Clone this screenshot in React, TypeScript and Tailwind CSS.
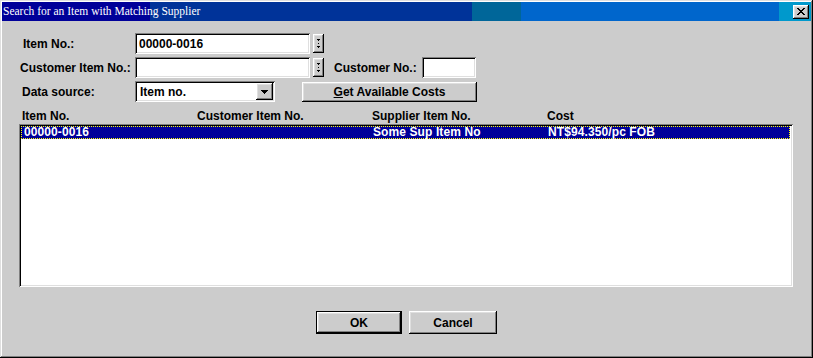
import type { ReactNode } from 'react';

const raised =
  'bg-[#cccccc] shadow-[inset_-1px_-1px_#000,inset_1px_1px_#fff,inset_-2px_-2px_#808080,inset_2px_2px_#dfdfdf]';
const sunken =
  'bg-white shadow-[inset_1px_1px_#808080,inset_-1px_-1px_#fff,inset_2px_2px_#000,inset_-2px_-2px_#dfdfdf]';

const COLUMNS = ['Item No.', 'Customer Item No.', 'Supplier Item No.', 'Cost'];
const ROWS = [['00000-0016', '', 'Some Sup Item No', 'NT$94.350/pc FOB']];

const SpinButton = () => (
  <div className={`${raised} w-[11px] h-[19px] ml-[3px] flex items-center justify-center`}>
    <svg width="11" height="19" viewBox="0 0 11 19" shapeRendering="crispEdges">
      <rect x="4" y="5" width="3" height="1" fill="#000" />
      <rect x="5" y="6" width="1" height="1" fill="#000" />
      <rect x="5" y="9" width="1" height="1" fill="#000" />
      <rect x="4" y="12" width="3" height="1" fill="#000" />
      <rect x="5" y="13" width="1" height="1" fill="#000" />
    </svg>
  </div>
);

const Button = ({ children, className }: { children: ReactNode; className: string }) => (
  <button
    type="button"
    className={`${raised} ${className} flex items-center justify-center text-black`}
  >
    {children}
  </button>
);

export default function App() {
  return (
    <div className="w-[813px] h-[358px] bg-[#cccccc] p-[2px] flex flex-col font-['Liberation_Sans',Arial,sans-serif] text-[12px] font-bold text-black shadow-[inset_-1px_-1px_#000,inset_1px_1px_#dfdfdf,inset_-2px_-2px_#808080,inset_2px_2px_#fff]">
      {/* Title bar */}
      <div className="h-[19px] flex items-center justify-between pr-[2px] bg-[linear-gradient(90deg,#000099_0,#000099_148px,#003399_148px,#003399_470px,#006699_470px,#006699_519px,#0066cc_519px,#0066cc_777px,#0099cc_777px)]">
        <span className="pl-[1px] text-white font-normal text-[11.5px] font-['Liberation_Serif',serif] leading-[19px]">
          Search for an Item with Matching Supplier
        </span>
        <div className={`${raised} w-[16px] h-[14px] flex items-center justify-center`}>
          <svg width="8" height="7" viewBox="0 0 8 7" shapeRendering="crispEdges">
            <path d="M0 0h2v1h-2zM6 0h2v1h-2zM1 1h2v1h-2zM5 1h2v1h-2zM2 2h4v1h-4zM3 3h2v1h-2zM2 4h4v1h-4zM1 5h2v1h-2zM5 5h2v1h-2zM0 6h2v1h-2zM6 6h2v1h-2z" fill="#000" />
          </svg>
        </div>
      </div>

      {/* Form */}
      <div className="flex flex-col gap-[3px] mt-[12px] pl-[17px]">
        <div className="flex items-center h-[21px]">
          <span className="w-[116px] pl-[4px]">Item No.:</span>
          <div className={`${sunken} w-[175px] h-[21px] pl-[4px] flex items-center`}>00000-0016</div>
          <SpinButton />
        </div>
        <div className="flex items-center h-[21px]">
          <span className="w-[116px] pl-[1px]">Customer Item No.:</span>
          <div className={`${sunken} w-[175px] h-[21px]`} />
          <SpinButton />
          <span className="ml-[10px] w-[88px]">Customer No.:</span>
          <div className={`${sunken} w-[54px] h-[21px]`} />
        </div>
        <div className="flex items-center h-[21px]">
          <span className="w-[116px] pl-[3px]">Data source:</span>
          <div className={`${sunken} w-[140px] h-[21px] pl-[5px] pr-[2px] flex items-center justify-between`}>
            <span>Item no.</span>
            <div className={`${raised} w-[17px] h-[17px] flex items-center justify-center`}>
              <svg width="7" height="4" viewBox="0 0 7 4" shapeRendering="crispEdges">
                <path d="M0 0h7v1h-7zM1 1h5v1h-5zM2 2h3v1h-3zM3 3h1v1h-1z" fill="#000" />
              </svg>
            </div>
          </div>
          <Button className="ml-[27px] w-[175px] h-[20px]">
            <span>
              <span className="underline">G</span>et Available Costs
            </span>
          </Button>
        </div>
      </div>

      {/* List */}
      <div className="flex flex-col pl-[17px] mt-[7px]">
        <div className="flex h-[14px] leading-[14px] pl-[3px]">
          {COLUMNS.map((c) => (
            <span key={c} className="w-[175px]">
              {c}
            </span>
          ))}
        </div>
        <div className={`${sunken} w-[774px] h-[163px] mt-[1px] p-[2px]`}>
          {ROWS.map((r) => (
            <div
              key={r[0]}
              className="flex h-[13px] leading-[11px] bg-[#000099] text-white border border-dotted border-[#ffff00] w-[769px] tracking-[0.1px]"
            >
              {r.map((v, i) => (
                <span key={i} className={i === 0 ? 'w-[176px] pl-[2px]' : 'w-[175px]'}>
                  {v}
                </span>
              ))}
            </div>
          ))}
        </div>
      </div>

      {/* Footer buttons */}
      <div className="flex justify-center gap-[7px] mt-[24px]">
        <div className="border border-black">
          <Button className="w-[84px] h-[21px]">OK</Button>
        </div>
        <Button className="w-[88px] h-[23px]">Cancel</Button>
      </div>
    </div>
  );
}
